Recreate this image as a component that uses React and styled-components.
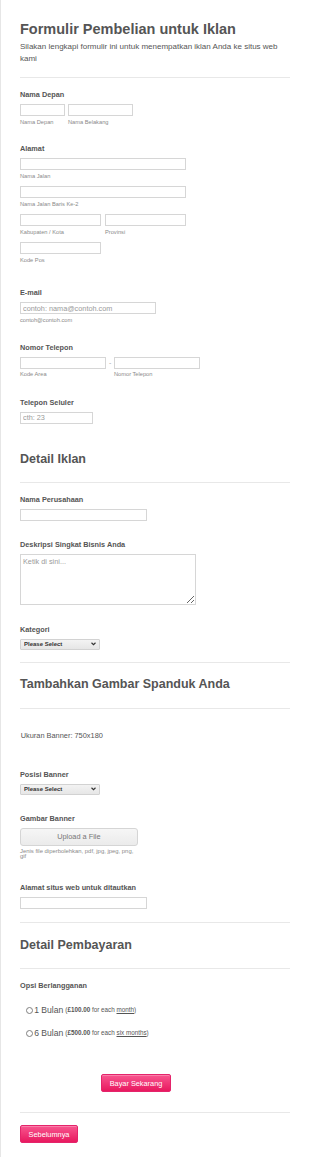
import React from "react";
import styled, { createGlobalStyle } from "styled-components";

const GlobalStyle = createGlobalStyle`
  html, body { margin: 0; padding: 0; background: #fff; }
  body { font-family: "Liberation Sans", Arial, sans-serif; color: #555; }
  * { box-sizing: border-box; }
`;

const FONT = `"Liberation Sans", Arial, sans-serif`;

const Form = styled.form`
  min-height: 1157px;
  border-left: 1px solid #e6e6e6;
  padding: 20px 20px 14px 19px;
  display: flex;
  flex-direction: column;
  align-items: flex-start;
`;

const Title = styled.h1`
  margin: 0;
  font-size: 14.5px;
  line-height: 18px;
  font-weight: 700;
  color: #555;
`;

const Desc = styled.p`
  margin: 2.5px 0 0;
  font-size: 8px;
  line-height: 12.3px;
  color: #555;
`;

const Heading = styled.h2`
  margin: ${(p) => p.$mt}px 0 0;
  font-size: 12.5px;
  line-height: 15px;
  font-weight: 700;
  color: #555;
`;

const Divider = styled.hr`
  align-self: stretch;
  margin: ${(p) => p.$mt}px 0 0;
  border: 0;
  height: 1px;
  background: #e8e8e8;
`;

const Field = styled.div`
  margin-top: ${(p) => p.$mt}px;
  display: flex;
  flex-direction: column;
  align-items: flex-start;
`;

const Label = styled.label`
  font-size: 7.3px;
  line-height: 10px;
  font-weight: 700;
  color: #555;
`;

const Controls = styled.div`
  margin-top: 4px;
  display: flex;
  flex-direction: column;
  align-items: flex-start;
`;

const Row = styled.div`
  display: flex;
  gap: ${(p) => p.$gap || 0}px;
  margin-top: ${(p) => p.$mt || 0}px;
`;

const Col = styled.div`
  display: flex;
  flex-direction: column;
`;

const Input = styled.input`
  display: block;
  width: ${(p) => p.$w}px;
  height: 12px;
  border: 1px solid #d6d6d6;
  border-radius: 0;
  padding: 0 2px;
  margin: 0;
  font-family: ${FONT};
  font-size: 7.3px;
  color: #555;
  background: #fff;
  outline: none;
  &::placeholder { color: #9a9a9a; }
`;

const Sub = styled.span`
  display: block;
  margin-top: ${(p) => (p.$mt != null ? p.$mt : 1.5)}px;
  font-size: ${(p) => p.$fs || 5.7}px;
  line-height: ${(p) => p.$lh || 8}px;
  color: #8a8a8a;
  width: ${(p) => (p.$w ? `${p.$w}px` : "auto")};
`;

const Dash = styled.span`
  width: 7.6px;
  height: 12px;
  font-size: 7px;
  line-height: 12px;
  text-align: center;
  color: #aaa;
`;

const TextArea = styled.textarea`
  display: block;
  width: 176.4px;
  height: 51px;
  border: 1px solid #d6d6d6;
  padding: 2px;
  margin: 0;
  font-family: ${FONT};
  font-size: 7.3px;
  color: #555;
  resize: both;
  outline: none;
  &::placeholder { color: #9a9a9a; }
`;

const SelectWrap = styled.div`
  position: relative;
  width: 79.7px;
  height: 11px;
`;

const Select = styled.select`
  display: block;
  appearance: none;
  width: 100%;
  height: 100%;
  margin: 0;
  padding: 0 0 0 3px;
  border: 1px solid #d2d2d2;
  border-radius: 1px;
  background: linear-gradient(#f3f3f3, #e6e6e6);
  font-family: ${FONT};
  font-size: 6px;
  line-height: 9px;
  font-weight: 700;
  color: #333;
  outline: none;
`;

const Chevron = styled.svg`
  position: absolute;
  right: 4px;
  top: 3.5px;
  width: 5px;
  height: 4px;
  pointer-events: none;
`;

const UploadButton = styled.button`
  display: block;
  width: 117.7px;
  height: 18px;
  margin: 0;
  padding: 0;
  border: 1px solid #d5d5d5;
  border-radius: 3px;
  background: linear-gradient(#f6f6f6, #ebebeb);
  font-family: ${FONT};
  font-size: 7.35px;
  color: #777;
`;

const Note = styled.p`
  margin: ${(p) => p.$mt}px 0 0 0.7px;
  font-size: 7.4px;
  line-height: 10px;
  color: #555;
`;

const RadioRow = styled.label`
  margin-top: ${(p) => p.$mt}px;
  padding-left: 5.7px;
  display: flex;
  align-items: center;
  height: 12px;
  color: #555;
`;

const Radio = styled.input`
  appearance: none;
  width: 7px;
  height: 7px;
  margin: 1px 1.5px 0 0;
  border: 1px solid #808080;
  border-radius: 50%;
  background: #fff;
`;

const Plan = styled.span`
  font-size: 8.6px;
  line-height: 12px;
`;

const Price = styled.span`
  margin-left: 2px;
  font-size: 6.3px;
  line-height: 12px;
  color: #555;
  b { font-weight: 700; }
  u { text-decoration: underline; }
`;

const PinkButton = styled.button`
  margin: ${(p) => p.$mt}px 0 0 ${(p) => p.$ml || 0}px;
  width: ${(p) => p.$w}px;
  height: 18.6px;
  padding: 0;
  border: 1px solid #e4246b;
  border-radius: 2px;
  background: linear-gradient(#f8568f, #e8195f);
  box-shadow: inset 0 1px 0 rgba(255, 255, 255, 0.25);
  font-family: ${FONT};
  font-size: 7.35px;
  color: #fff;
`;

const ChevronIcon = () => (
  <Chevron viewBox="0 0 10 8">
    <path d="M1 1.5 L5 5.5 L9 1.5" fill="none" stroke="#333" strokeWidth="2.2" />
  </Chevron>
);

const PleaseSelect = () => (
  <SelectWrap>
    <Select defaultValue="">
      <option value="">Please Select</option>
    </Select>
    <ChevronIcon />
  </SelectWrap>
);

export default function App() {
  return (
    <>
      <GlobalStyle />
      <Form onSubmit={(e) => e.preventDefault()}>
        <Title>Formulir Pembelian untuk Iklan</Title>
        <Desc>Silakan lengkapi formulir ini untuk menempatkan iklan Anda ke situs web kami</Desc>
        <Divider $mt={11.9} />

        <Field $mt={12.3}>
          <Label>Nama Depan</Label>
          <Controls>
            <Row $gap={2.6}>
              <Col>
                <Input $w={45.4} />
                <Sub>Nama Depan</Sub>
              </Col>
              <Col>
                <Input $w={65.4} />
                <Sub>Nama Belakang</Sub>
              </Col>
            </Row>
          </Controls>
        </Field>

        <Field $mt={18.5}>
          <Label>Alamat</Label>
          <Controls>
            <Col>
              <Input $w={166.4} />
              <Sub>Nama Jalan</Sub>
            </Col>
            <Row $mt={6.7}>
              <Col>
                <Input $w={166.4} />
                <Sub>Nama Jalan Baris Ke-2</Sub>
              </Col>
            </Row>
            <Row $mt={6.5} $gap={3.6}>
              <Col>
                <Input $w={81.4} />
                <Sub>Kabupaten / Kota</Sub>
              </Col>
              <Col>
                <Input $w={81.4} />
                <Sub>Provinsi</Sub>
              </Col>
            </Row>
            <Row $mt={6.3}>
              <Col>
                <Input $w={81.4} />
                <Sub>Kode Pos</Sub>
              </Col>
            </Row>
          </Controls>
        </Field>

        <Field $mt={24.5}>
          <Label>E-mail</Label>
          <Controls>
            <Input $w={135.7} placeholder="contoh: nama@contoh.com" />
            <Sub>contoh@contoh.com</Sub>
          </Controls>
        </Field>

        <Field $mt={19.2}>
          <Label>Nomor Telepon</Label>
          <Controls>
            <Row>
              <Col>
                <Input $w={86.4} />
                <Sub>Kode Area</Sub>
              </Col>
              <Dash>-</Dash>
              <Col>
                <Input $w={86} />
                <Sub>Nomor Telepon</Sub>
              </Col>
            </Row>
          </Controls>
        </Field>

        <Field $mt={19.2}>
          <Label>Telepon Seluler</Label>
          <Controls>
            <Input $w={73} placeholder="cth: 23" />
          </Controls>
        </Field>

        <Heading $mt={28.1}>Detail Iklan</Heading>
        <Divider $mt={15.2} />

        <Field $mt={12.3}>
          <Label>Nama Perusahaan</Label>
          <Controls>
            <Input $w={127.4} />
          </Controls>
        </Field>

        <Field $mt={18.7}>
          <Label>Deskripsi Singkat Bisnis Anda</Label>
          <Controls>
            <TextArea placeholder="Ketik di sini..." />
          </Controls>
        </Field>

        <Field $mt={20}>
          <Label>Kategori</Label>
          <Controls>
            <PleaseSelect />
          </Controls>
        </Field>

        <Divider $mt={12.5} />
        <Heading $mt={14}>Tambahkan Gambar Spanduk Anda</Heading>
        <Divider $mt={15.5} />

        <Note $mt={22.3}>Ukuran Banner: 750x180</Note>

        <Field $mt={28.4}>
          <Label>Posisi Banner</Label>
          <Controls>
            <PleaseSelect />
          </Controls>
        </Field>

        <Field $mt={19}>
          <Label>Gambar Banner</Label>
          <Controls>
            <UploadButton type="button">Upload a File</UploadButton>
            <Sub $w={118} $fs={5.9} $lh={5.8} $mt={3}>
              Jenis file diperbolehkan, pdf, jpg, jpeg, png, gif
            </Sub>
          </Controls>
        </Field>

        <Field $mt={23.3}>
          <Label>Alamat situs web untuk ditautkan</Label>
          <Controls>
            <Input $w={127.4} />
          </Controls>
        </Field>

        <Divider $mt={12.8} />
        <Heading $mt={14.7}>Detail Pembayaran</Heading>
        <Divider $mt={15.3} />

        <Field $mt={11.8}>
          <Label>Opsi Berlangganan</Label>
        </Field>

        <RadioRow $mt={12.7}>
          <Radio type="radio" name="plan" />
          <Plan>1 Bulan</Plan>
          <Price>
            (<b>£100.00</b> for each <u>month</u>)
          </Price>
        </RadioRow>
        <RadioRow $mt={11.3}>
          <Radio type="radio" name="plan" />
          <Plan>6 Bulan</Plan>
          <Price>
            (<b>£500.00</b> for each <u>six months</u>)
          </Price>
        </RadioRow>

        <PinkButton type="submit" $mt={34.7} $ml={81.3} $w={69.4}>
          Bayar Sekarang
        </PinkButton>

        <Divider $mt={19.2} />

        <PinkButton type="button" $mt={12.2} $w={58}>
          Sebelumnya
        </PinkButton>
      </Form>
    </>
  );
}
